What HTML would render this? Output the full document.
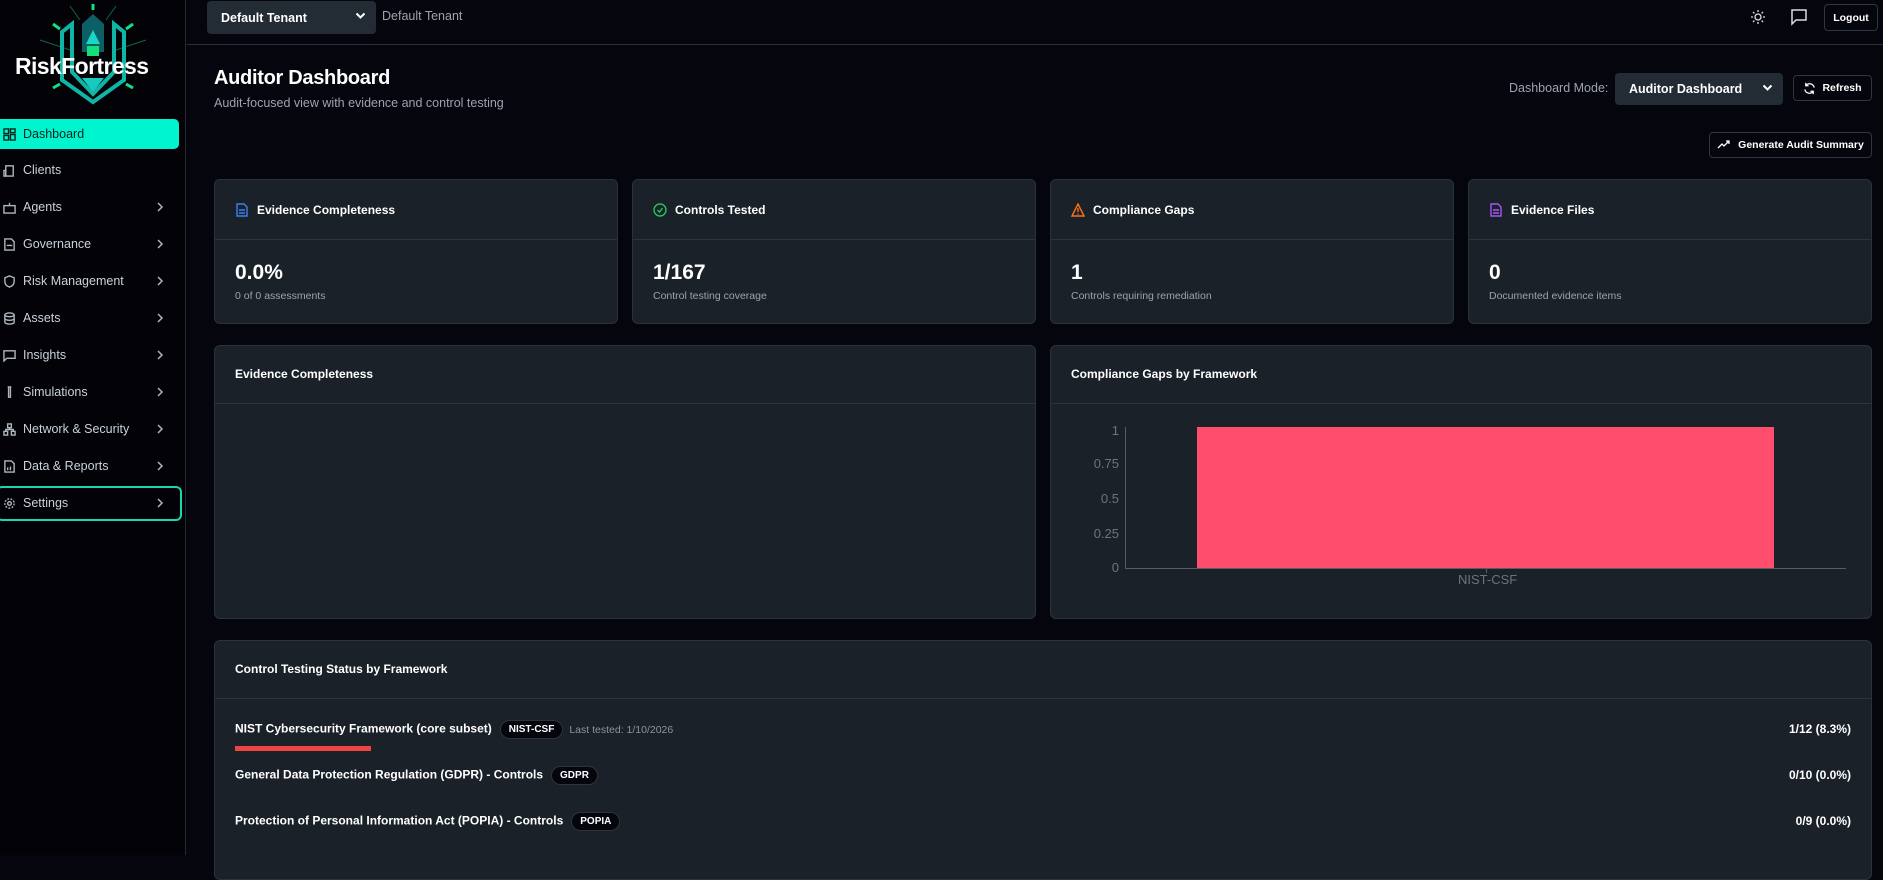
<!DOCTYPE html>
<html><head><meta charset="utf-8"><style>
*{box-sizing:border-box;margin:0;padding:0}
body{width:1883px;height:855px;overflow:hidden;background:#05050d;font-family:"Liberation Sans",sans-serif;color:#fff;position:relative}
.a{position:absolute}
.side{left:0;top:0;width:186px;height:855px;border-right:1px solid #232a33;background:#020207}
.nav{left:0;width:178px;height:30px;display:flex;align-items:center;font-size:12.5px;color:#c9d1da;padding-left:3px}
.nav svg{width:13px;height:13px;margin-right:7px;stroke:#aeb6bf;fill:none;stroke-width:1.5}
.nav .ch{position:absolute;right:14px;top:8px;width:8px;height:14px;margin:0}
.card{background:#1b2129;border:1px solid #2a323c;border-radius:6px}
.ct{font-size:12px;font-weight:bold;display:flex;align-items:center}
.hd{position:absolute;left:0;right:0;border-top:1px solid #2c343e}
.big{font-size:21px;font-weight:bold}
.sub{font-size:10.5px;color:#9aa4b0}
.btn{border:1px solid #2e3640;border-radius:4px;background:#05050d;font-size:10.5px;font-weight:bold;display:flex;align-items:center;justify-content:center}
.sel{background:#232b35;border-radius:4px;font-size:13px;display:flex;align-items:center;padding-left:14px}
.badge{display:inline-block;background:#05050d;border:1px solid #333;border-radius:10px;font-size:10px;font-weight:bold;padding:3px 8px;margin-left:8px;vertical-align:middle}
.row{font-size:12px;font-weight:bold}
.yl{font-size:13px;color:#6b737c;text-align:right;width:30px}
.dn{position:absolute;right:10px;top:11px}
</style></head><body>
<div class="a side">
 <svg class="a" style="left:10px;top:2px" width="166" height="110" viewBox="0 0 166 110">
  <g stroke="#10e08a" stroke-width="3"><line x1="83" y1="2" x2="83" y2="8"/><line x1="43" y1="22" x2="50" y2="27"/><line x1="123" y1="22" x2="116" y2="27"/><line x1="43" y1="86" x2="50" y2="82"/><line x1="123" y1="86" x2="116" y2="82"/></g>
  <g stroke="#164" stroke-width="1"><line x1="30" y1="38" x2="60" y2="48"/><line x1="136" y1="38" x2="106" y2="48"/><line x1="60" y1="4" x2="70" y2="18"/><line x1="106" y1="4" x2="96" y2="18"/></g>
  <path d="M52 30 L62 22 L62 70 L83 92 L104 70 L104 22 L114 30 L114 78 L83 100 L52 78Z" fill="none" stroke="#0fb5a5" stroke-width="4"/>
  <path d="M72 22 L83 12 L94 22 L94 50 L72 50Z" fill="#0c5f64"/>
  <path d="M83 28 L76 42 L90 42Z" fill="#19d6c8"/>
  <rect x="77" y="44" width="12" height="10" fill="#12e07a"/>
  <path d="M72 76 L94 76 L83 90Z" fill="#19c8c0"/>
 </svg>
 <div class="a" style="left:15px;top:53px;font-size:23px;font-weight:bold;letter-spacing:-0.6px">RiskFortress</div>
 <div class="a" style="left:0;top:119px;width:179px;height:30px;background:#00f5cf;border-radius:0 5px 5px 0"></div>
 <div class="a nav" style="top:119px;color:#04231e"><svg viewBox="0 0 14 14" style="stroke:#04231e"><rect x="1" y="1" width="5" height="5"/><rect x="8" y="1" width="5" height="4"/><rect x="1" y="8" width="5" height="5"/><rect x="8" y="7" width="5" height="6"/></svg>Dashboard</div>
 <div class="a nav" style="top:155px"><svg viewBox="0 0 14 14"><rect x="3" y="2" width="8" height="11"/><rect x="1" y="7" width="2" height="6"/></svg>Clients</div>
 <div class="a nav" style="top:192px"><svg viewBox="0 0 14 14"><rect x="1" y="5" width="12" height="8"/><line x1="7" y1="2" x2="7" y2="5"/></svg>Agents<svg class="ch" viewBox="0 0 8 14"><path d="M2 3l4 4-4 4"/></svg></div>
 <div class="a nav" style="top:229px"><svg viewBox="0 0 14 14"><path d="M2 1h7l3 3v9H2z"/><line x1="4" y1="8" x2="10" y2="8"/></svg>Governance<svg class="ch" viewBox="0 0 8 14"><path d="M2 3l4 4-4 4"/></svg></div>
 <div class="a nav" style="top:266px"><svg viewBox="0 0 14 14"><path d="M7 1l5 2v4c0 3-2 5-5 6-3-1-5-3-5-6V3z"/></svg>Risk Management<svg class="ch" viewBox="0 0 8 14"><path d="M2 3l4 4-4 4"/></svg></div>
 <div class="a nav" style="top:303px"><svg viewBox="0 0 14 14"><ellipse cx="7" cy="3" rx="5" ry="2"/><path d="M2 3v8c0 1 2 2 5 2s5-1 5-2V3M2 7c0 1 2 2 5 2s5-1 5-2"/></svg>Assets<svg class="ch" viewBox="0 0 8 14"><path d="M2 3l4 4-4 4"/></svg></div>
 <div class="a nav" style="top:340px"><svg viewBox="0 0 14 14"><path d="M1 2h12v8H4l-3 3z"/></svg>Insights<svg class="ch" viewBox="0 0 8 14"><path d="M2 3l4 4-4 4"/></svg></div>
 <div class="a nav" style="top:377px"><svg viewBox="0 0 14 14"><path d="M5 1h4M6 1v11h2V1"/></svg>Simulations<svg class="ch" viewBox="0 0 8 14"><path d="M2 3l4 4-4 4"/></svg></div>
 <div class="a nav" style="top:414px"><svg viewBox="0 0 14 14"><rect x="5" y="1" width="4" height="4"/><rect x="1" y="9" width="4" height="4"/><rect x="9" y="9" width="4" height="4"/><path d="M7 5v2H3v2M7 7h4v2"/></svg>Network &amp; Security<svg class="ch" viewBox="0 0 8 14"><path d="M2 3l4 4-4 4"/></svg></div>
 <div class="a nav" style="top:451px"><svg viewBox="0 0 14 14"><path d="M2 1h7l3 3v9H2z"/><line x1="5" y1="11" x2="5" y2="8"/><line x1="8" y1="11" x2="8" y2="7"/></svg>Data &amp; Reports<svg class="ch" viewBox="0 0 8 14"><path d="M2 3l4 4-4 4"/></svg></div>
 <div class="a" style="left:-4px;top:486px;width:186px;height:35px;border:2px solid #19d6b0;border-radius:6px"></div>
 <div class="a nav" style="top:488px"><svg viewBox="0 0 14 14"><circle cx="7" cy="7" r="2"/><circle cx="7" cy="7" r="5" stroke-dasharray="2 1.5"/></svg>Settings<svg class="ch" viewBox="0 0 8 14"><path d="M2 3l4 4-4 4"/></svg></div>
</div>

<!-- top bar -->
<div class="a sel" style="left:207px;top:1px;width:169px;height:33px;font-weight:bold;font-size:12.5px">Default Tenant<svg class="dn" width="11" height="8" viewBox="0 0 11 8" fill="none" stroke="#fff" stroke-width="2"><path d="M1.5 1.5l4 4 4-4"/></svg></div>
<div class="a" style="left:382px;top:9px;font-size:12.5px;color:#9aa4b0">Default Tenant</div>
<svg class="a" style="left:1750px;top:9px" width="16" height="16" viewBox="0 0 16 16" stroke="#ddd" fill="none" stroke-width="1.3"><circle cx="8" cy="8" r="3"/><path d="M8 1v2M8 13v2M1 8h2M13 8h2M3 3l1.4 1.4M11.6 11.6L13 13M3 13l1.4-1.4M11.6 4.4L13 3"/></svg>
<svg class="a" style="left:1790px;top:8px" width="18" height="18" viewBox="0 0 18 18" stroke="#ddd" fill="none" stroke-width="1.5"><path d="M2 2h14v10H6l-4 4z"/></svg>
<div class="a btn" style="left:1824px;top:4px;width:54px;height:27px">Logout</div>
<div class="a" style="left:187px;top:44px;width:1696px;border-top:1px solid #29313b"></div>

<div class="a" style="left:214px;top:67px;font-size:20px;font-weight:bold;letter-spacing:-0.3px">Auditor Dashboard</div>
<div class="a" style="left:214px;top:96px;font-size:12.5px;color:#9aa4b0">Audit-focused view with evidence and control testing</div>
<div class="a" style="left:1509px;top:81px;font-size:12.5px;color:#9aa4b0">Dashboard Mode:</div>
<div class="a sel" style="left:1615px;top:73px;width:168px;height:32px;font-weight:bold;font-size:12.5px">Auditor Dashboard<svg class="dn" width="11" height="8" viewBox="0 0 11 8" fill="none" stroke="#fff" stroke-width="2"><path d="M1.5 1.5l4 4 4-4"/></svg></div>
<div class="a btn" style="left:1793px;top:75px;width:79px;height:26px"><svg width="13" height="13" viewBox="0 0 14 14" fill="none" stroke="#fff" stroke-width="1.4" style="margin-right:6px"><path d="M12 6A5 5 0 0 0 3 4M2 8a5 5 0 0 0 9 2M3 1v3h3M11 13v-3H8"/></svg>Refresh</div>
<div class="a btn" style="left:1709px;top:132px;width:163px;height:26px"><svg width="13" height="10" viewBox="0 0 13 10" fill="none" stroke="#fff" stroke-width="1.3" style="margin-right:8px"><path d="M1 8l4-4 2 2 5-5M9 1h3v3"/></svg>Generate Audit Summary</div>

<!-- stat cards -->
<div class="a card" style="left:214px;top:179px;width:404px;height:145px"><div class="hd" style="top:59px"></div>
 <div class="a ct" style="left:20px;top:23px"><svg width="14" height="14" viewBox="0 0 14 14" fill="none" stroke="#3b82f6" stroke-width="1.4" style="margin-right:8px"><path d="M2 1h7l3 3v9H2z"/><path d="M4 7h6M4 10h6"/></svg>Evidence Completeness</div>
 <div class="a big" style="left:20px;top:81px">0.0%</div><div class="a sub" style="left:20px;top:110px">0 of 0 assessments</div></div>
<div class="a card" style="left:632px;top:179px;width:404px;height:145px"><div class="hd" style="top:59px"></div>
 <div class="a ct" style="left:20px;top:23px"><svg width="14" height="14" viewBox="0 0 14 14" fill="none" stroke="#22c55e" stroke-width="1.4" style="margin-right:8px"><circle cx="7" cy="7" r="6"/><path d="M4.5 7l2 2 3-4"/></svg>Controls Tested</div>
 <div class="a big" style="left:20px;top:81px">1/167</div><div class="a sub" style="left:20px;top:110px">Control testing coverage</div></div>
<div class="a card" style="left:1050px;top:179px;width:404px;height:145px"><div class="hd" style="top:59px"></div>
 <div class="a ct" style="left:20px;top:23px"><svg width="14" height="14" viewBox="0 0 14 14" fill="none" stroke="#f97316" stroke-width="1.4" style="margin-right:8px"><path d="M7 1L13 13H1z"/><path d="M7 5v4M7 10.5v1"/></svg>Compliance Gaps</div>
 <div class="a big" style="left:20px;top:81px">1</div><div class="a sub" style="left:20px;top:110px">Controls requiring remediation</div></div>
<div class="a card" style="left:1468px;top:179px;width:404px;height:145px"><div class="hd" style="top:59px"></div>
 <div class="a ct" style="left:20px;top:23px"><svg width="14" height="14" viewBox="0 0 14 14" fill="none" stroke="#a855f7" stroke-width="1.4" style="margin-right:8px"><path d="M2 1h7l3 3v9H2z"/><path d="M4 7h6M4 10h6"/></svg>Evidence Files</div>
 <div class="a big" style="left:20px;top:81px">0</div><div class="a sub" style="left:20px;top:110px">Documented evidence items</div></div>

<!-- chart cards -->
<div class="a card" style="left:214px;top:345px;width:822px;height:274px"><div class="hd" style="top:57px"></div>
 <div class="a ct" style="left:20px;top:21px">Evidence Completeness</div></div>
<div class="a card" style="left:1050px;top:345px;width:822px;height:274px"><div class="hd" style="top:57px"></div>
 <div class="a ct" style="left:20px;top:21px">Compliance Gaps by Framework</div></div>
<div class="a" style="left:1197px;top:427px;width:577px;height:141px;background:#ff4d6e"></div>
<div class="a" style="left:1125px;top:427px;height:142px;border-left:1px solid #555c63"></div>
<div class="a" style="left:1125px;top:568px;width:721px;border-top:1px solid #555c63"></div>
<div class="a" style="left:1486px;top:568px;height:5px;border-left:1px solid #555c63"></div>
<div class="a yl" style="left:1089px;top:423px">1</div>
<div class="a yl" style="left:1089px;top:456px">0.75</div>
<div class="a yl" style="left:1089px;top:491px">0.5</div>
<div class="a yl" style="left:1089px;top:526px">0.25</div>
<div class="a yl" style="left:1089px;top:560px">0</div>
<div class="a" style="left:1458px;top:572px;font-size:13px;color:#6b737c">NIST-CSF</div>

<!-- bottom -->
<div class="a card" style="left:214px;top:640px;width:1658px;height:240px"><div class="hd" style="top:57px"></div>
 <div class="a ct" style="left:20px;top:21px">Control Testing Status by Framework</div>
 <div class="a row" style="left:20px;top:79px">NIST Cybersecurity Framework (core subset)<span class="badge">NIST-CSF</span><span style="font-size:10.5px;color:#8a949f;font-weight:normal;margin-left:6px">Last tested: 1/10/2026</span></div>
 <div class="a" style="left:20px;top:105px;width:136px;height:5px;background:#ef4444"></div>
 <div class="a row" style="left:20px;top:125px">General Data Protection Regulation (GDPR) - Controls<span class="badge">GDPR</span></div>
 <div class="a row" style="left:20px;top:171px">Protection of Personal Information Act (POPIA) - Controls<span class="badge">POPIA</span></div>
 <div class="a row" style="right:20px;top:81px">1/12 (8.3%)</div>
 <div class="a row" style="right:20px;top:127px">0/10 (0.0%)</div>
 <div class="a row" style="right:20px;top:173px">0/9 (0.0%)</div>
</div>
</body></html>
